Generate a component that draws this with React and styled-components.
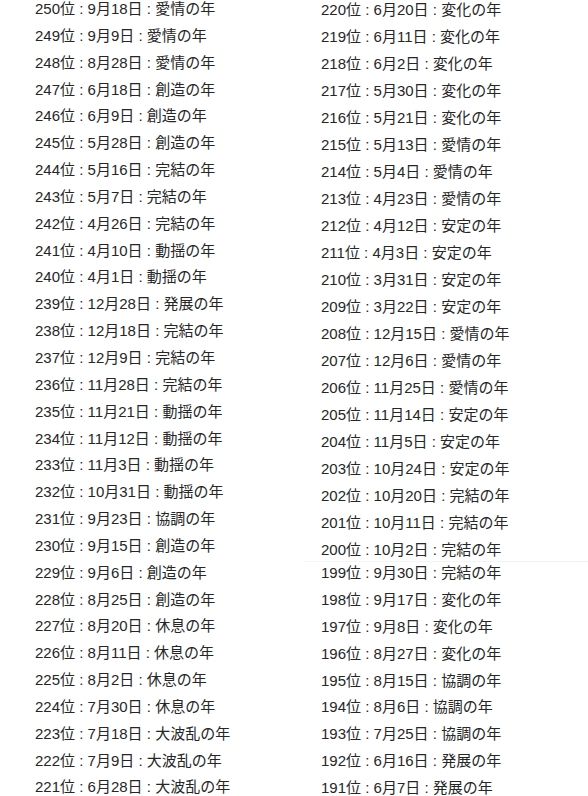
import React from 'react'
import styled, { createGlobalStyle } from 'styled-components'

const GlobalStyle = createGlobalStyle`
  html, body {
    margin: 0;
    padding: 0;
    background: #ffffff;
  }
  body {
    font-family: "Liberation Sans", "Noto Sans CJK JP", sans-serif;
    color: #262626;
  }
`

const Page = styled.div`
  width: 588px;
  height: 796px;
  overflow: hidden;
`

const Columns = styled.div`
  display: grid;
  grid-template-columns: 286px 267px;
  padding-left: 35px;
`

const List = styled.ul`
  list-style: none;
  margin: 0;
  padding: 0;
  margin-top: ${({ offset = 0 }) => offset}px;
`

const Block = styled.div`
  position: relative;
  ${({ seam }) =>
    seam &&
    `
    margin-top: -4px;
    &::before {
      content: '';
      position: absolute;
      top: -3px;
      left: -16px;
      right: -35px;
      height: 1px;
      background: linear-gradient(to right, #f6f6f6, #f1f1f1 85%, #e6e6e6);
    }
  `}
`

const Row = styled.li`
  font-size: 15px;
  line-height: 16px;
  height: 16px;
  padding-bottom: ${({ pitch }) => pitch - 16}px;
  white-space: nowrap;
`

const Kanji = styled.span`
  font-family: "Noto Sans CJK JP", sans-serif;
`

const left = [
  ['250', '9', '18', '愛情'],
  ['249', '9', '9', '愛情'],
  ['248', '8', '28', '愛情'],
  ['247', '6', '18', '創造'],
  ['246', '6', '9', '創造'],
  ['245', '5', '28', '創造'],
  ['244', '5', '16', '完結'],
  ['243', '5', '7', '完結'],
  ['242', '4', '26', '完結'],
  ['241', '4', '10', '動揺'],
  ['240', '4', '1', '動揺'],
  ['239', '12', '28', '発展'],
  ['238', '12', '18', '完結'],
  ['237', '12', '9', '完結'],
  ['236', '11', '28', '完結'],
  ['235', '11', '21', '動揺'],
  ['234', '11', '12', '動揺'],
  ['233', '11', '3', '動揺'],
  ['232', '10', '31', '動揺'],
  ['231', '9', '23', '協調'],
  ['230', '9', '15', '創造'],
  ['229', '9', '6', '創造'],
  ['228', '8', '25', '創造'],
  ['227', '8', '20', '休息'],
  ['226', '8', '11', '休息'],
  ['225', '8', '2', '休息'],
  ['224', '7', '30', '休息'],
  ['223', '7', '18', '大波乱'],
  ['222', '7', '9', '大波乱'],
  ['221', '6', '28', '大波乱'],
]

const rightTop = [
  ['220', '6', '20', '変化'],
  ['219', '6', '11', '変化'],
  ['218', '6', '2', '変化'],
  ['217', '5', '30', '変化'],
  ['216', '5', '21', '変化'],
  ['215', '5', '13', '愛情'],
  ['214', '5', '4', '愛情'],
  ['213', '4', '23', '愛情'],
  ['212', '4', '12', '安定'],
  ['211', '4', '3', '安定'],
  ['210', '3', '31', '安定'],
  ['209', '3', '22', '安定'],
  ['208', '12', '15', '愛情'],
  ['207', '12', '6', '愛情'],
  ['206', '11', '25', '愛情'],
  ['205', '11', '14', '安定'],
  ['204', '11', '5', '安定'],
  ['203', '10', '24', '安定'],
  ['202', '10', '20', '完結'],
  ['201', '10', '11', '完結'],
  ['200', '10', '2', '完結'],
]

const rightBottom = [
  ['199', '9', '30', '完結'],
  ['198', '9', '17', '変化'],
  ['197', '9', '8', '変化'],
  ['196', '8', '27', '変化'],
  ['195', '8', '15', '協調'],
  ['194', '8', '6', '協調'],
  ['193', '7', '25', '協調'],
  ['192', '6', '16', '発展'],
  ['191', '6', '7', '発展'],
]

function Ranking({ items, pitch, offset }) {
  return (
    <List offset={offset}>
      {items.map(([rank, month, day, kind]) => (
        <Row key={rank} pitch={pitch}>
          {rank}
          <Kanji>位</Kanji> : {month}
          <Kanji>月</Kanji>
          {day}
          <Kanji>日</Kanji> : <Kanji>{kind}の年</Kanji>
        </Row>
      ))}
    </List>
  )
}

export default function App() {
  return (
    <Page>
      <GlobalStyle />
      <Columns>
        <Ranking items={left} pitch={26.85} />
        <div>
          <Block>
            <Ranking items={rightTop} pitch={27.0} offset={1} />
          </Block>
          <Block seam>
            <Ranking items={rightBottom} pitch={26.9} offset={0} />
          </Block>
        </div>
      </Columns>
    </Page>
  )
}
